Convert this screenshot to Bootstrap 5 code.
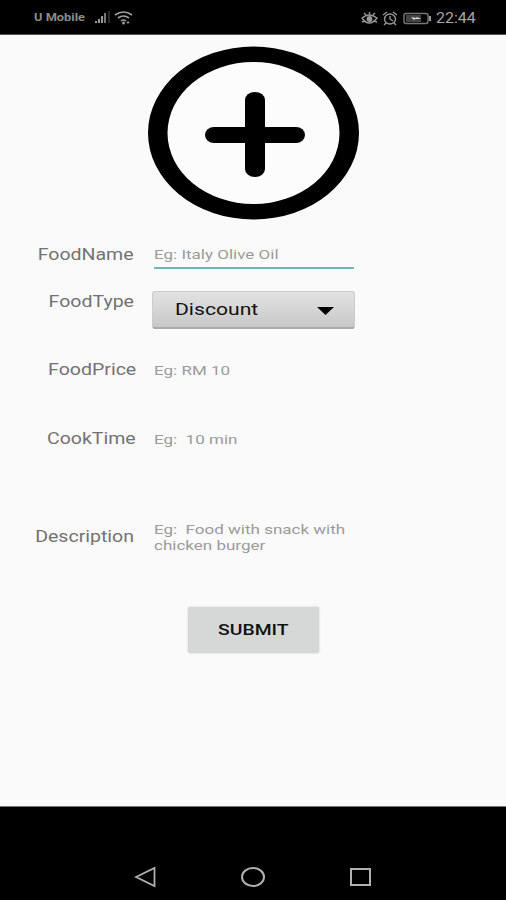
<!DOCTYPE html>
<html lang="en">
<head>
<meta charset="utf-8">
<meta name="viewport" content="width=device-width, initial-scale=1">
<title>Add food</title>
<link href="https://cdn.jsdelivr.net/npm/bootstrap@5.3.0/dist/css/bootstrap.min.css" rel="stylesheet">
<style>
body{font-family:Roboto,"Liberation Sans",sans-serif;background:#fafafa;height:900px;overflow:hidden}
.status{height:35px;background:#000;border-bottom:1px solid #555;color:#a6a6a6;padding:1px 30px 0 34px}
.wide{display:inline-block;white-space:pre;transform:scaleX(1.22);transform-origin:left center}
.carrier{font-size:10.5px;font-weight:700;width:61px;color:#8c8c8c;padding-top:1px}
.clock{font-size:14.5px;width:40px;padding-top:2px}
.clock .wide{transform:scaleX(1.1)}
.hero{height:199px;padding-top:11px}
.field{height:var(--h)}
.f-name{--h:47px}.f-type{--h:69px}.f-price{--h:69px}.f-cook{--h:97px}.f-desc{--h:91px}
.caption{width:134px;line-height:20px;padding-top:11px;font-size:16px;color:#727272}
.caption .wide{transform-origin:right center}
.nudge{width:136px;padding-top:10px}
.entry{margin-left:20px;width:200px;line-height:16px;padding-top:12px;font-size:13.5px;color:#9b9b9b}
.entry .wide{transform:scaleX(1.26)}
.nudge + .entry{margin-left:18px}
.f-name .entry{height:35px;border-bottom:2px solid #68bcb8}
.f-desc .caption{padding-top:11px}
.f-desc .entry{padding-top:5px}
.picker{margin-left:18px;width:203px;height:38px;margin-top:10px;padding:2px 20px 0 22px;font-size:16.5px;color:#111;background:linear-gradient(#e2e2e2,#c8c8c8);border:1px solid #ccc;border-bottom:2px solid #aaa;border-radius:3px}
.picker .wide{transform:scaleX(1.28)}
.send{width:131px;height:46px;background:#d6d8d8;color:#111;font-size:15px;font-weight:500;border:0;border-radius:2px;box-shadow:0 0 2px #c5c5c5}
.send .wide{transform:scaleX(1.29);transform-origin:center}
.keys{height:94px;background:#000;border-top:1px solid #777;padding:0 134px 12px}
</style>
</head>
<body class="d-flex flex-column">
<header class="status d-flex align-items-center flex-shrink-0">
<span class="carrier"><span class="wide">U Mobile</span></span>
<svg width="40" height="16" viewBox="0 0 40 16" fill="#999"><path d="M0 13h2v-2H0zM3 13h2V9H3zM6 13h2V6H6z"/><path d="M9 13h2V3H9z" fill="#777"/><path d="M13 13h2V1h-2z" fill="#292929"/><g fill="none" stroke="#a0a0a0" stroke-width="1.6"><path d="M20 5Q28.500-1 37 5M23 8Q28.500 4 34 8M26 11Q28.500 9 31 11"/></g><circle cx="28.500" cy="13" r="1.500"/><path d="M33 11v3M31.500 12.500h3" stroke="#888"/></svg>
<svg class="ms-auto me-1" width="71" height="16" viewBox="0 0 71 16" fill="none" stroke="#999" stroke-width="1.400"><path d="M1 8Q8 2 16 8Q8 18 1 8zM3 3l2 2M8.500 2v3M14 3l-2 2M1 12l3-1M16 12l-3-1"/><circle cx="8.500" cy="9" r="2.200" fill="#999"/><ellipse cx="29" cy="9" rx="5.500" ry="5"/><path d="M29 6v3l3 2M22 5l4-3M36 5l-4-3M25 13l-2 2M33 13l2 2"/><rect x="43" y="3.500" width="24" height="10" rx="2" stroke="#777"/><path d="M45 5h15v7H45z" fill="#444" stroke="none"/><path d="M69 6v5" stroke-width="2"/><path d="m50 7 5 1 1-1 4 2-6 0-1 1z" fill="#ddd" stroke="none"/></svg>
<span class="clock"><span class="wide">22:44</span></span>
</header>
<main class="flex-grow-1 overflow-hidden">
<div class="hero text-center">
<svg class="d-block mx-auto" width="212" height="174" viewBox="0 0 212 174"><ellipse cx="106.500" cy="87" rx="96" ry="79" fill="#fcfcfc" stroke="none"/><path fill-rule="evenodd" d="M1 87a105.500 86.500 0 1 0 211 0a105.500 86.500 0 1 0-211 0zM20.500 87a86 71 0 1 1 172 0a86 71 0 1 1-172 0z"/><rect x="98" y="46" width="20" height="85" rx="10" ry="8"/><rect x="58" y="81" width="100" height="16" rx="9" ry="8"/></svg>
</div>
<div class="field f-name d-flex align-items-start"><div class="caption text-end"><span class="wide">FoodName</span></div><div class="entry"><span class="wide">Eg: Italy Olive Oil</span></div></div>
<div class="field f-type d-flex align-items-start"><div class="caption text-end"><span class="wide">FoodType</span></div><div class="picker d-flex align-items-center justify-content-between"><span class="wide">Discount</span><svg width="17" height="8" viewBox="0 0 17 8"><path d="M0 0h17L8.500 8z"/></svg></div></div>
<div class="field f-price d-flex align-items-start"><div class="caption nudge text-end"><span class="wide">FoodPrice</span></div><div class="entry"><span class="wide">Eg: RM 10</span></div></div>
<div class="field f-cook d-flex align-items-start"><div class="caption nudge text-end"><span class="wide">CookTime</span></div><div class="entry"><span class="wide">Eg:  10 min</span></div></div>
<div class="field f-desc d-flex align-items-start"><div class="caption text-end"><span class="wide">Description</span></div><div class="entry"><span class="wide">Eg:  Food with snack with
chicken burger</span></div></div>
<div class="d-flex justify-content-center"><button type="button" class="send p-0"><span class="wide">SUBMIT</span></button></div>
</main>
<footer class="keys d-flex justify-content-between align-items-end flex-shrink-0">
<svg width="22" height="22" viewBox="0 0 22 22" fill="none" stroke="#b0b0b0" stroke-width="1.800"><path d="M2 11 20.500 2v18z"/></svg>
<svg width="26" height="22" viewBox="0 0 26 22" fill="none" stroke="#b0b0b0" stroke-width="2"><ellipse cx="13" cy="11" rx="11" ry="9"/></svg>
<svg width="22" height="22" viewBox="0 0 22 22" fill="none" stroke="#b0b0b0" stroke-width="2"><rect x="1" y="3" width="19" height="16"/></svg>
</footer>
</body>
</html>
